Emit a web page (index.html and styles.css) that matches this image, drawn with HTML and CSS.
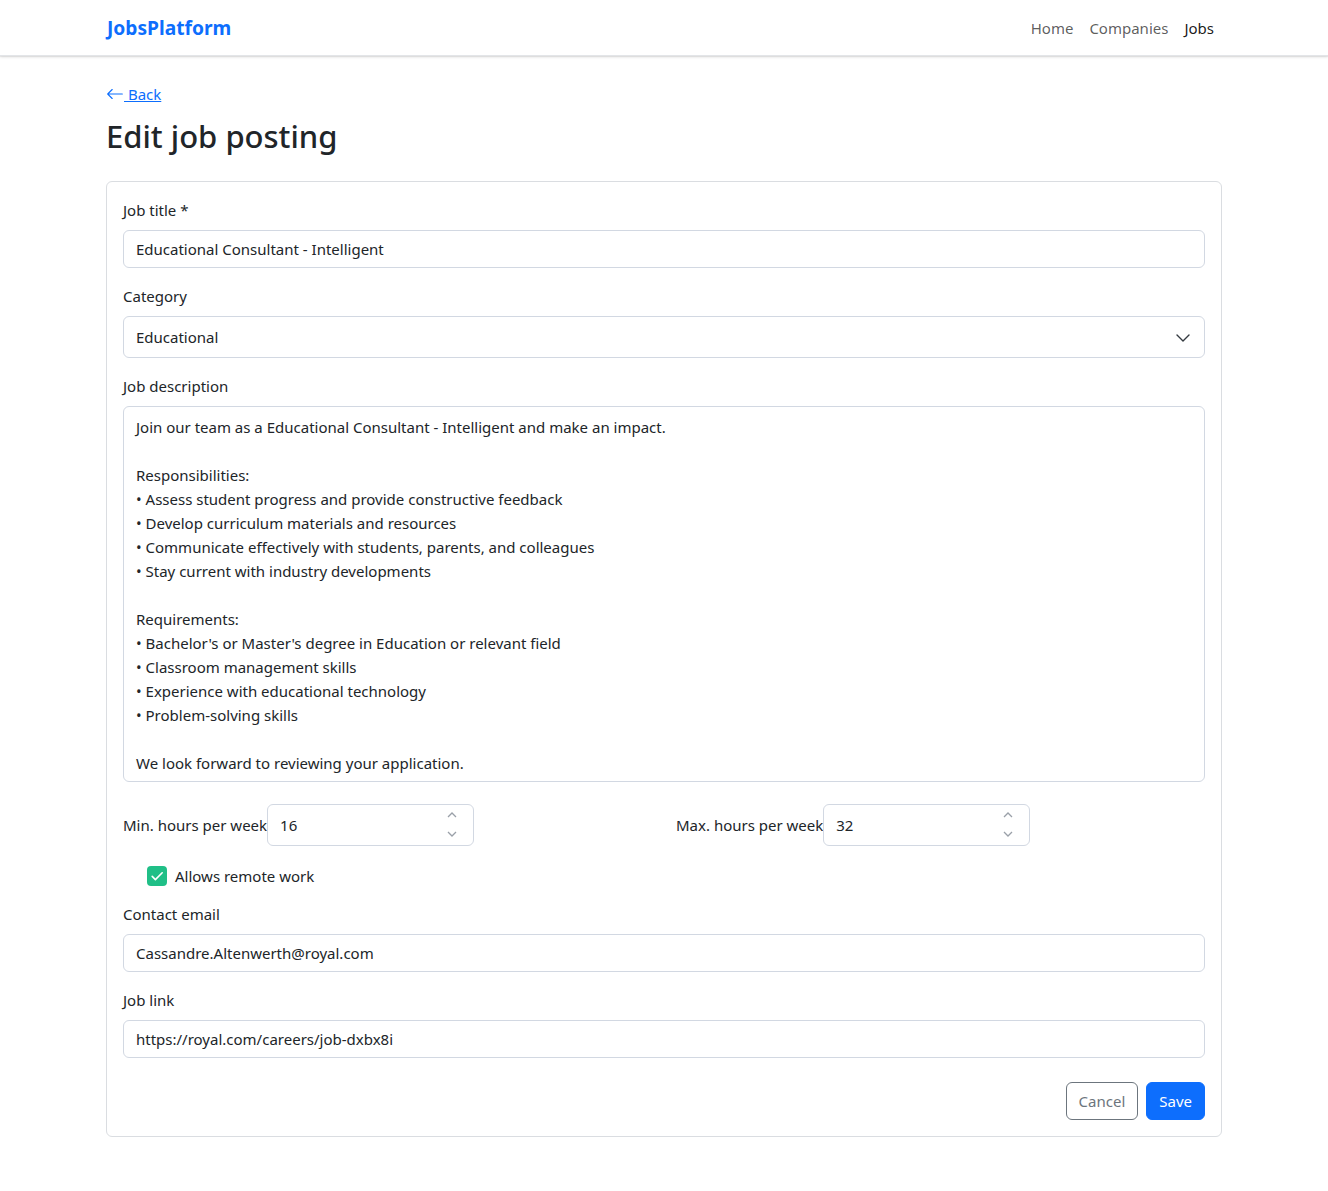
FILE: index.html
```html
<!DOCTYPE html>
<html lang="en">
<head>
<meta charset="utf-8">
<title>Edit job posting</title>
<link rel="stylesheet" href="styles.css">
</head>
<body>
<nav class="navbar">
  <div class="container nav-inner">
    <a class="brand" href="#">JobsPlatform</a>
    <ul class="nav-links">
      <li><a class="nav-link" href="#">Home</a></li>
      <li><a class="nav-link" href="#">Companies</a></li>
      <li><a class="nav-link active" href="#">Jobs</a></li>
    </ul>
  </div>
</nav>
<main class="container main">
  <a class="back" href="#"><svg class="back-icon" width="16" height="16" viewBox="0 0 16 16"><path fill="currentColor" fill-rule="evenodd" d="M15 8a.5.5 0 0 0-.5-.5H2.707l3.147-3.146a.5.5 0 1 0-.708-.708l-4 4a.5.5 0 0 0 0 .708l4 4a.5.5 0 0 0 .708-.708L2.707 8.5H14.5A.5.5 0 0 0 15 8"/></svg> Back</a>
  <h1 class="title">Edit job posting</h1>
  <form class="card">
    <div class="field">
      <label class="label">Job title *</label>
      <div class="input">Educational Consultant - Intelligent</div>
    </div>
    <div class="field">
      <label class="label">Category</label>
      <div class="input select">Educational
        <svg class="chev" width="16" height="16" viewBox="0 0 16 16"><path fill="none" stroke="#343a40" stroke-linecap="round" stroke-linejoin="round" stroke-width="1.4" d="m2 5 6 6 6-6"/></svg>
      </div>
    </div>
    <div class="field">
      <label class="label">Job description</label>
      <div class="textarea">Join our team as a Educational Consultant - Intelligent and make an impact.

Responsibilities:
• Assess student progress and provide constructive feedback
• Develop curriculum materials and resources
• Communicate effectively with students, parents, and colleagues
• Stay current with industry developments

Requirements:
• Bachelor's or Master's degree in Education or relevant field
• Classroom management skills
• Experience with educational technology
• Problem-solving skills

We look forward to reviewing your application.</div>
    </div>
    <div class="hours-row">
      <div class="hours-col">
        <label class="label inline">Min. hours per week</label>
        <div class="input number">16
          <span class="spin"><svg width="12" height="8" viewBox="0 0 12 8"><path d="M2 6 6 2l4 4" fill="none" stroke="#9aa0a8" stroke-width="1.3"/></svg><svg width="12" height="8" viewBox="0 0 12 8"><path d="M2 2l4 4 4-4" fill="none" stroke="#9aa0a8" stroke-width="1.3"/></svg></span>
        </div>
      </div>
      <div class="hours-col">
        <label class="label inline">Max. hours per week</label>
        <div class="input number">32
          <span class="spin"><svg width="12" height="8" viewBox="0 0 12 8"><path d="M2 6 6 2l4 4" fill="none" stroke="#9aa0a8" stroke-width="1.3"/></svg><svg width="12" height="8" viewBox="0 0 12 8"><path d="M2 2l4 4 4-4" fill="none" stroke="#9aa0a8" stroke-width="1.3"/></svg></span>
        </div>
      </div>
    </div>
    <div class="check">
      <span class="checkbox"><svg width="16" height="16" viewBox="0 0 20 20"><path fill="none" stroke="#fff" stroke-linecap="round" stroke-linejoin="round" stroke-width="2" d="m4 10.5 4 4L16.5 6"/></svg></span>
      <span class="check-label">Allows remote work</span>
    </div>
    <div class="field">
      <label class="label">Contact email</label>
      <div class="input">Cassandre.Altenwerth@royal.com</div>
    </div>
    <div class="field">
      <label class="label">Job link</label>
      <div class="input">https://royal.com/careers/job-dxbx8i</div>
    </div>
    <div class="actions">
      <button type="button" class="btn btn-outline">Cancel</button>
      <button type="button" class="btn btn-primary">Save</button>
    </div>
  </form>
</main>
</body>
</html>
```
FILE: styles.css
```css
* { box-sizing: border-box; }
body {
  margin: 0;
  font-family: "Noto Sans", "Open Sans", sans-serif;
  font-size: 16px;
  line-height: 24px;
  color: #212529;
  background: #fff;
}
.container {
  width: 1140px;
  margin: 0 auto;
  padding: 0 12px;
}
.navbar {
  height: 56px;
  background: #fff;
  box-shadow: 0 1px 3px rgba(0,0,0,0.12), 0 1px 1px rgba(0,0,0,0.06);
  border-bottom: 1px solid #e3e5e8;
}
.nav-inner {
  display: flex;
  align-items: center;
  justify-content: space-between;
  height: 56px;
}
.brand {
  color: #0d6efd;
  font-weight: 700;
  font-size: 19.2px;
  text-decoration: none;
  margin-left: 1px;
}
.nav-links {
  list-style: none;
  display: flex;
  margin: 0;
  padding: 0;
}
.nav-link {
  display: block;
  padding: 8px 8px;
  color: rgba(0,0,0,0.65);
  text-decoration: none;
  font-size: 15px;
}
.nav-link.active { color: rgba(0,0,0,0.9); }
.main { padding-top: 26px; padding-bottom: 54px; }
.back {
  display: inline-flex;
  align-items: center;
  color: #0d6efd;
  text-decoration: underline;
  font-size: 15px;
  line-height: 24px;
  white-space: pre;
}
.back-icon { width: 18px; height: 18px; margin-right: 0; }
.title {
  font-size: 31px;
  font-weight: 500;
  line-height: 38px;
  margin: 8px 0 26px;
}
.card {
  display: block;
  border: 1px solid #dadde1;
  border-radius: 6px;
  padding: 16px;
}
.field { margin-bottom: 16px; }
.label {
  display: block;
  margin-bottom: 8px;
  font-size: 15px;
}
.label.inline { display: inline-block; margin: 0; white-space: nowrap; }
.input {
  position: relative;
  height: 38px;
  border: 1px solid #d2d8e2;
  border-radius: 6px;
  padding: 6px 12px;
  font-size: 15px;
}
.input.select { height: 42px; padding-top: 8px; }
.chev { position: absolute; right: 13px; top: 13px; }
.textarea {
  height: 376px;
  border: 1px solid #d2d8e2;
  border-radius: 6px;
  padding: 8px 12px;
  font-size: 15px;
  white-space: pre-wrap;
}
.hours-row {
  display: grid;
  grid-template-columns: 1fr 1fr;
  column-gap: 24px;
  margin-top: 22px;
  margin-bottom: 18px;
}
.hours-col { display: flex; align-items: center; }
.input.number {
  width: 207px;
  height: 42px;
  padding-top: 8px;
}
.spin {
  position: absolute;
  right: 15px;
  top: 6px;
  display: flex;
  flex-direction: column;
  gap: 11px;
}
.spin svg { display: block; }
.check {
  display: flex;
  align-items: center;
  padding-left: 24px;
  margin-bottom: 14px;
}
.checkbox {
  width: 20px;
  height: 20px;
  border-radius: 4px;
  background: #20bf87;
  display: flex;
  align-items: center;
  justify-content: center;
  margin-right: 8px;
}
.check-label { font-size: 15px; }
.actions {
  display: flex;
  justify-content: flex-end;
  gap: 8px;
  margin-top: 24px;
}
.btn {
  height: 38px;
  padding: 6px 12px;
  font-family: inherit;
  font-size: 15px;
  border-radius: 6px;
  line-height: 24px;
}
.btn-outline {
  background: #fff;
  color: #6c757d;
  border: 1px solid #6c757d;
}
.btn-primary {
  background: #0d6efd;
  color: #fff;
  border: 1px solid #0d6efd;
}
```
